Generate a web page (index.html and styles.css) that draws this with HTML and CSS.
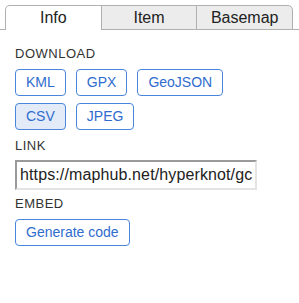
FILE: index.html
```html
<!DOCTYPE html>
<html>
<head>
<meta charset="utf-8">
<link rel="stylesheet" href="styles.css">
</head>
<body>
<div class="tabs">
  <div class="tab tab-first active">Info</div>
  <div class="tab">Item</div>
  <div class="tab tab-last">Basemap</div>
</div>
<div class="panel">
  <div class="label">DOWNLOAD</div>
  <div class="buttons">
    <button class="btn">KML</button>
    <button class="btn">GPX</button>
    <button class="btn">GeoJSON</button>
    <button class="btn btn-active">CSV</button>
    <button class="btn">JPEG</button>
  </div>
  <div class="label">LINK</div>
  <input class="link-input" type="text" value="https://maphub.net/hyperknot/gcNnYzLPqmRt" readonly>
  <div class="label">EMBED</div>
  <div class="buttons">
    <button class="btn">Generate code</button>
  </div>
</div>
</body>
</html>
```
FILE: styles.css
```css
html, body {
  margin: 0;
  padding: 0;
  background: #fff;
}
body {
  font-family: "Liberation Sans", Helvetica, Arial, sans-serif;
  color: #222;
}
.tabs {
  display: flex;
  padding: 5px 6px 0 5px;
  border-bottom: 1px solid #b0b0b0;
}
.tab {
  flex: 1;
  height: 23px;
  line-height: 24px;
  font-size: 16px;
  text-align: center;
  background: #ececec;
  border: 1px solid #b0b0b0;
  margin-bottom: -1px;
  margin-left: -1px;
  color: #222;
}
.tab-first {
  margin-left: 0;
  border-top-left-radius: 5px;
}
.tab-last {
  border-top-right-radius: 5px;
}
.tab.active {
  background: #fff;
  border-bottom: none;
  height: 24px;
}
.panel {
  width: 242px;
  padding: 16px 15px 0 15px;
}
.label {
  font-size: 13px;
  line-height: 16px;
  letter-spacing: 0.5px;
  color: #333;
  margin-bottom: 7px;
}
.buttons {
  display: flex;
  flex-wrap: wrap;
  gap: 7px 10px;
  margin-bottom: 8px;
}
.btn {
  font-family: "Liberation Sans", Helvetica, Arial, sans-serif;
  font-size: 14px;
  height: 27px;
  line-height: 25px;
  padding: 0 10px;
  border: 1px solid #4a86dc;
  border-radius: 4px;
  background: #fff;
  color: #2f6cce;
  box-sizing: border-box;
}
.btn-active {
  background: #e3ebf9;
}
.link-input {
  display: block;
  box-sizing: border-box;
  width: 242px;
  height: 30px;
  margin: -1px 0 6px 0;
  padding: 0 2px 0 3px;
  font-family: "Liberation Sans", Helvetica, Arial, sans-serif;
  font-size: 16px;
  letter-spacing: 0.12px;
  color: #222;
  border-style: solid;
  border-width: 2px;
  border-color: #9a9a9a #e4e4e4 #e4e4e4 #9a9a9a;
  outline: none;
}
```
